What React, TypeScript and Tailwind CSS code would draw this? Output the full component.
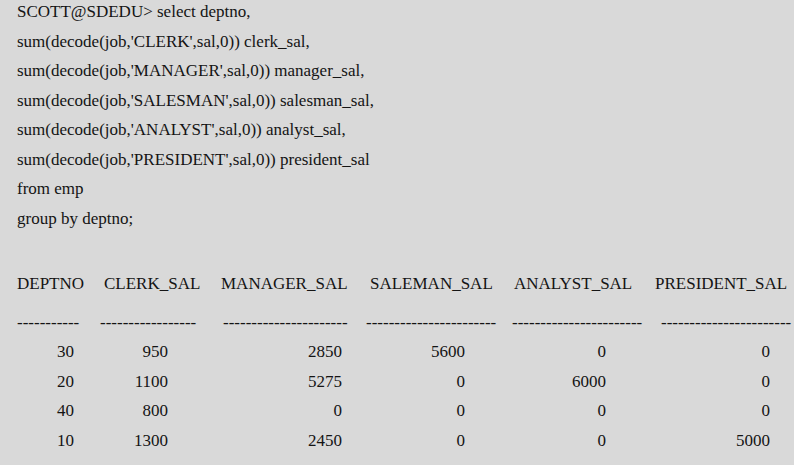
const sqlLines = [
  "SCOTT@SDEDU> select deptno,",
  "sum(decode(job,'CLERK',sal,0)) clerk_sal,",
  "sum(decode(job,'MANAGER',sal,0)) manager_sal,",
  "sum(decode(job,'SALESMAN',sal,0)) salesman_sal,",
  "sum(decode(job,'ANALYST',sal,0)) analyst_sal,",
  "sum(decode(job,'PRESIDENT',sal,0)) president_sal",
  "from emp",
  "group by deptno;",
];

// each column: header offset, dash offset + count, right padding for numbers
const columns = [
  { name: "DEPTNO", head: "pl-0", dash: "pl-0", dashes: 11, num: "pr-[25px]" },
  { name: "CLERK_SAL", head: "pl-[5px]", dash: "pl-px", dashes: 17, num: "pr-[51px]" },
  { name: "MANAGER_SAL", head: "pl-[2px]", dash: "pl-[4px]", dashes: 22, num: "pr-[22px]" },
  { name: "SALEMAN_SAL", head: "pl-[6px]", dash: "pl-[2px]", dashes: 23, num: "pr-[45px]" },
  { name: "ANALYST_SAL", head: "pl-[4px]", dash: "pl-[2px]", dashes: 23, num: "pr-[46px]" },
  { name: "PRESIDENT_SAL", head: "pl-[3px]", dash: "pl-[9px]", dashes: 23, num: "pr-[24px]" },
];

const rows = [
  [30, 950, 2850, 5600, 0, 0],
  [20, 1100, 5275, 0, 6000, 0],
  [40, 800, 0, 0, 0, 0],
  [10, 1300, 2450, 0, 0, 5000],
];

const grid = "grid grid-cols-[82px_120px_145px_146px_142px_142px]";

export default function App() {
  return (
    <div className="w-[794px] h-[465px] overflow-hidden bg-[#d9d9d9] text-[#141414] [font-family:'Liberation_Serif','Times_New_Roman',serif] text-[17px] leading-[29.5px] pl-[17px]">
      <div className="mt-[-3px]">
        {sqlLines.map((line) => (
          <div key={line} className="whitespace-pre">{line}</div>
        ))}
      </div>

      <div className={`${grid} mt-[36px] whitespace-nowrap`}>
        {columns.map((c) => (
          <div key={c.name} className={c.head}>{c.name}</div>
        ))}
      </div>

      <div className={`${grid} mt-[9px] whitespace-nowrap`}>
        {columns.map((c) => (
          <div key={c.name} className={`${c.dash} overflow-hidden`}>{"-".repeat(c.dashes)}</div>
        ))}
      </div>

      {rows.map((row, i) => (
        <div key={i} className={`${grid} whitespace-nowrap`}>
          {row.map((v, j) => (
            <div key={j} className={`${columns[j].num} text-right`}>{v}</div>
          ))}
        </div>
      ))}
    </div>
  );
}
